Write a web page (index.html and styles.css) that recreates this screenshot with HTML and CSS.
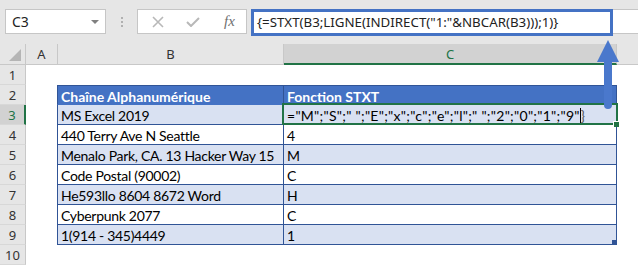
FILE: index.html
```html
<!DOCTYPE html>
<html lang="fr">
<head>
   <meta charset="UTF-8">
   <title>STXT</title>
   <link rel="stylesheet" href="styles.css">
</head>
<body>
   <div class="page">
      <div class="toolbar">
         <div class="namebox"><span>C3</span><span class="drop"></span></div>
         <div class="dots"><i></i><i></i><i></i></div>
         <div class="buttons">
            <svg class="icon-x" width="12" height="12" viewBox="0 0 12 12"><path d="M1 1 L11 11 M11 1 L1 11" stroke="#b8b8b8" stroke-width="1.6" fill="none"/></svg>
            <svg class="icon-ok" width="14" height="10" viewBox="0 0 14 10"><path d="M1 5 L5 9 L13 1" stroke="#b8b8b8" stroke-width="2" fill="none"/></svg>
            <span class="fx">fx</span>
         </div>
         <div class="formula-bar">
            <div class="formula">{=STXT(B3;LIGNE(INDIRECT("1:"&amp;NBCAR(B3)));1)}</div>
         </div>
      </div>

      <div class="sheet">
         <div class="hd corner"><span class="tri"></span></div>
         <div class="hd">A</div>
         <div class="hd">B</div>
         <div class="hd sel">C</div>
         <div class="hd last"></div>

         <div class="rh">1</div><div></div><div></div><div></div><div></div>

         <div class="rh">2</div><div></div>
         <div class="t b head">Chaîne Alphanumérique</div>
         <div class="t c head">Fonction STXT</div><div></div>

         <div class="rh sel">3</div><div></div>
         <div class="t b band">MS Excel 2019</div>
         <div class="t c band active">="M";"S";" ";"E";"x";"c";"e";"l";" ";"2";"0";"1";"9"<span class="cursor"></span><span class="brace">}</span></div><div></div>

         <div class="rh">4</div><div></div>
         <div class="t b">440 Terry Ave N Seattle</div>
         <div class="t c">4</div><div></div>

         <div class="rh">5</div><div></div>
         <div class="t b band">Menalo Park, CA. 13 Hacker Way 15</div>
         <div class="t c band">M</div><div></div>

         <div class="rh">6</div><div></div>
         <div class="t b">Code Postal (90002)</div>
         <div class="t c">C</div><div></div>

         <div class="rh">7</div><div></div>
         <div class="t b band">He593llo 8604 8672 Word</div>
         <div class="t c band">H</div><div></div>

         <div class="rh">8</div><div></div>
         <div class="t b">Cyberpunk 2077</div>
         <div class="t c">C</div><div></div>

         <div class="rh">9</div><div></div>
         <div class="t b band">1(914 - 345)4449</div>
         <div class="t c band corner-end">1</div><div></div>

         <div class="rh">10</div><div></div><div></div><div></div><div></div>
      </div>

      <svg class="arrow" width="24" height="72" viewBox="0 0 24 72">
         <path d="M12 0 L23 22 L16 22 L16 65 A4 4 0 0 1 8 65 L8 22 L1 22 Z" fill="#4a78cc"/>
      </svg>
   </div>
</body>
</html>
```

FILE: styles.css
```css
body {
   margin: 0;
   background: #ffffff;
}
.page {
   position: relative;
   width: 638px;
   height: 265px;
   overflow: hidden;
}
.toolbar {
   height: 44px;
   box-sizing: border-box;
   padding: 9px 0 0 5px;
   background: #e6e6e6;
   display: flex;
   align-items: flex-start;
   font-family: "Noto Sans", sans-serif;
}
.namebox {
   width: 101px;
   height: 25px;
   box-sizing: border-box;
   border: 1px solid #c6c6c6;
   background: #fff;
   display: flex;
   align-items: center;
   justify-content: space-between;
   padding: 0 6px 0 6px;
   font-size: 14px;
   color: #222;
}
.drop {
   width: 0;
   height: 0;
   border-left: 4px solid transparent;
   border-right: 4px solid transparent;
   border-top: 4px solid #808080;
}
.dots {
   width: 31px;
   height: 25px;
   display: flex;
   flex-direction: column;
   align-items: center;
   justify-content: center;
   gap: 2px;
}
.dots i {
   width: 2px;
   height: 2px;
   background: #b0b0b0;
}
.buttons {
   width: 110px;
   height: 25px;
   box-sizing: border-box;
   border: 1px solid #c6c6c6;
   background: #fff;
   display: flex;
   align-items: center;
   padding-left: 14px;
}
.icon-x {
   margin-right: 22px;
}
.icon-ok {
   margin-right: 24px;
}
.fx {
   font-family: "Liberation Serif", serif;
   font-style: italic;
   font-size: 15px;
   color: #707070;
}
.formula-bar {
   flex: 1;
   height: 25px;
   margin-left: 4px;
   box-sizing: border-box;
   border-top: 1px solid #c6c6c6;
   border-bottom: 1px solid #c6c6c6;
   background: #fff;
   display: flex;
}
.formula {
   width: 362px;
   height: 27px;
   margin-top: -1px;
   box-sizing: border-box;
   border: 3px solid #4472c4;
   background: #fff;
   padding-left: 3px;
   font-size: 13.3px;
   line-height: 20px;
   color: #222;
   white-space: nowrap;
}
.sheet {
   display: grid;
   grid-template-columns: 26px 32px 226px 333px 1fr;
   grid-template-rows: 21px;
   grid-auto-rows: 20px;
   font-family: Lato, "Liberation Sans", sans-serif;
   font-size: 14px;
   color: #000;
}
.hd {
   background: #e6e6e6;
   box-sizing: border-box;
   border-right: 1px solid #c8c8c8;
   border-bottom: 1px solid #c8c8c8;
   text-align: center;
   font-family: "Noto Sans", sans-serif;
   font-size: 13px;
   line-height: 20px;
   color: #333;
}
.hd.last {
   border-right: none;
}
.hd.sel {
   background: #d2d2d2;
   border-bottom: 2px solid #217346;
   color: #217346;
}
.corner {
   position: relative;
}
.tri {
   position: absolute;
   right: 4px;
   bottom: 3px;
   width: 0;
   height: 0;
   border-left: 12px solid transparent;
   border-bottom: 12px solid #b5b5b5;
}
.rh {
   background: #e6e6e6;
   box-sizing: border-box;
   border-right: 1px solid #c8c8c8;
   border-bottom: 1px solid #d8d8d8;
   text-align: center;
   font-family: "Noto Sans", sans-serif;
   font-size: 13px;
   line-height: 20px;
   color: #333;
}
.rh.sel {
   background: #d2d2d2;
   border-right: 2px solid #217346;
   color: #217346;
}
.t {
   box-sizing: border-box;
   border-right: 1px solid #305496;
   border-bottom: 1px solid #305496;
   padding: 1px 0 0 3px;
   line-height: 19px;
   white-space: nowrap;
   letter-spacing: -0.3px;
}
.t.b {
   border-left: 1px solid #305496;
   margin-left: -1px;
}
.t.band {
   background: #d9e1f2;
}
.t.head {
   background: #4472c4;
   color: #fff;
   font-weight: bold;
   border-top: 1px solid #305496;
   border-bottom-color: #4472c4;
   letter-spacing: 0;
}
.t.active {
   position: relative;
   letter-spacing: 0.27px;
}
.t.active::before {
   content: "";
   position: absolute;
   left: -2px;
   top: -2px;
   right: -2px;
   bottom: -1px;
   border: 2px solid #217346;
}
.t.active::after {
   content: "";
   position: absolute;
   right: -3px;
   bottom: -3px;
   width: 5px;
   height: 5px;
   background: #217346;
   border-left: 1px solid #fff;
   border-top: 1px solid #fff;
}
.cursor {
   display: inline-block;
   width: 1px;
   height: 16px;
   background: #000;
   vertical-align: -3px;
}
.brace {
   color: #555;
}
.corner-end {
   position: relative;
}
.corner-end::after {
   content: "";
   position: absolute;
   right: 0;
   bottom: 0;
   width: 4px;
   height: 4px;
   background: #305496;
}
.arrow {
   position: absolute;
   left: 596px;
   top: 40px;
}
```
